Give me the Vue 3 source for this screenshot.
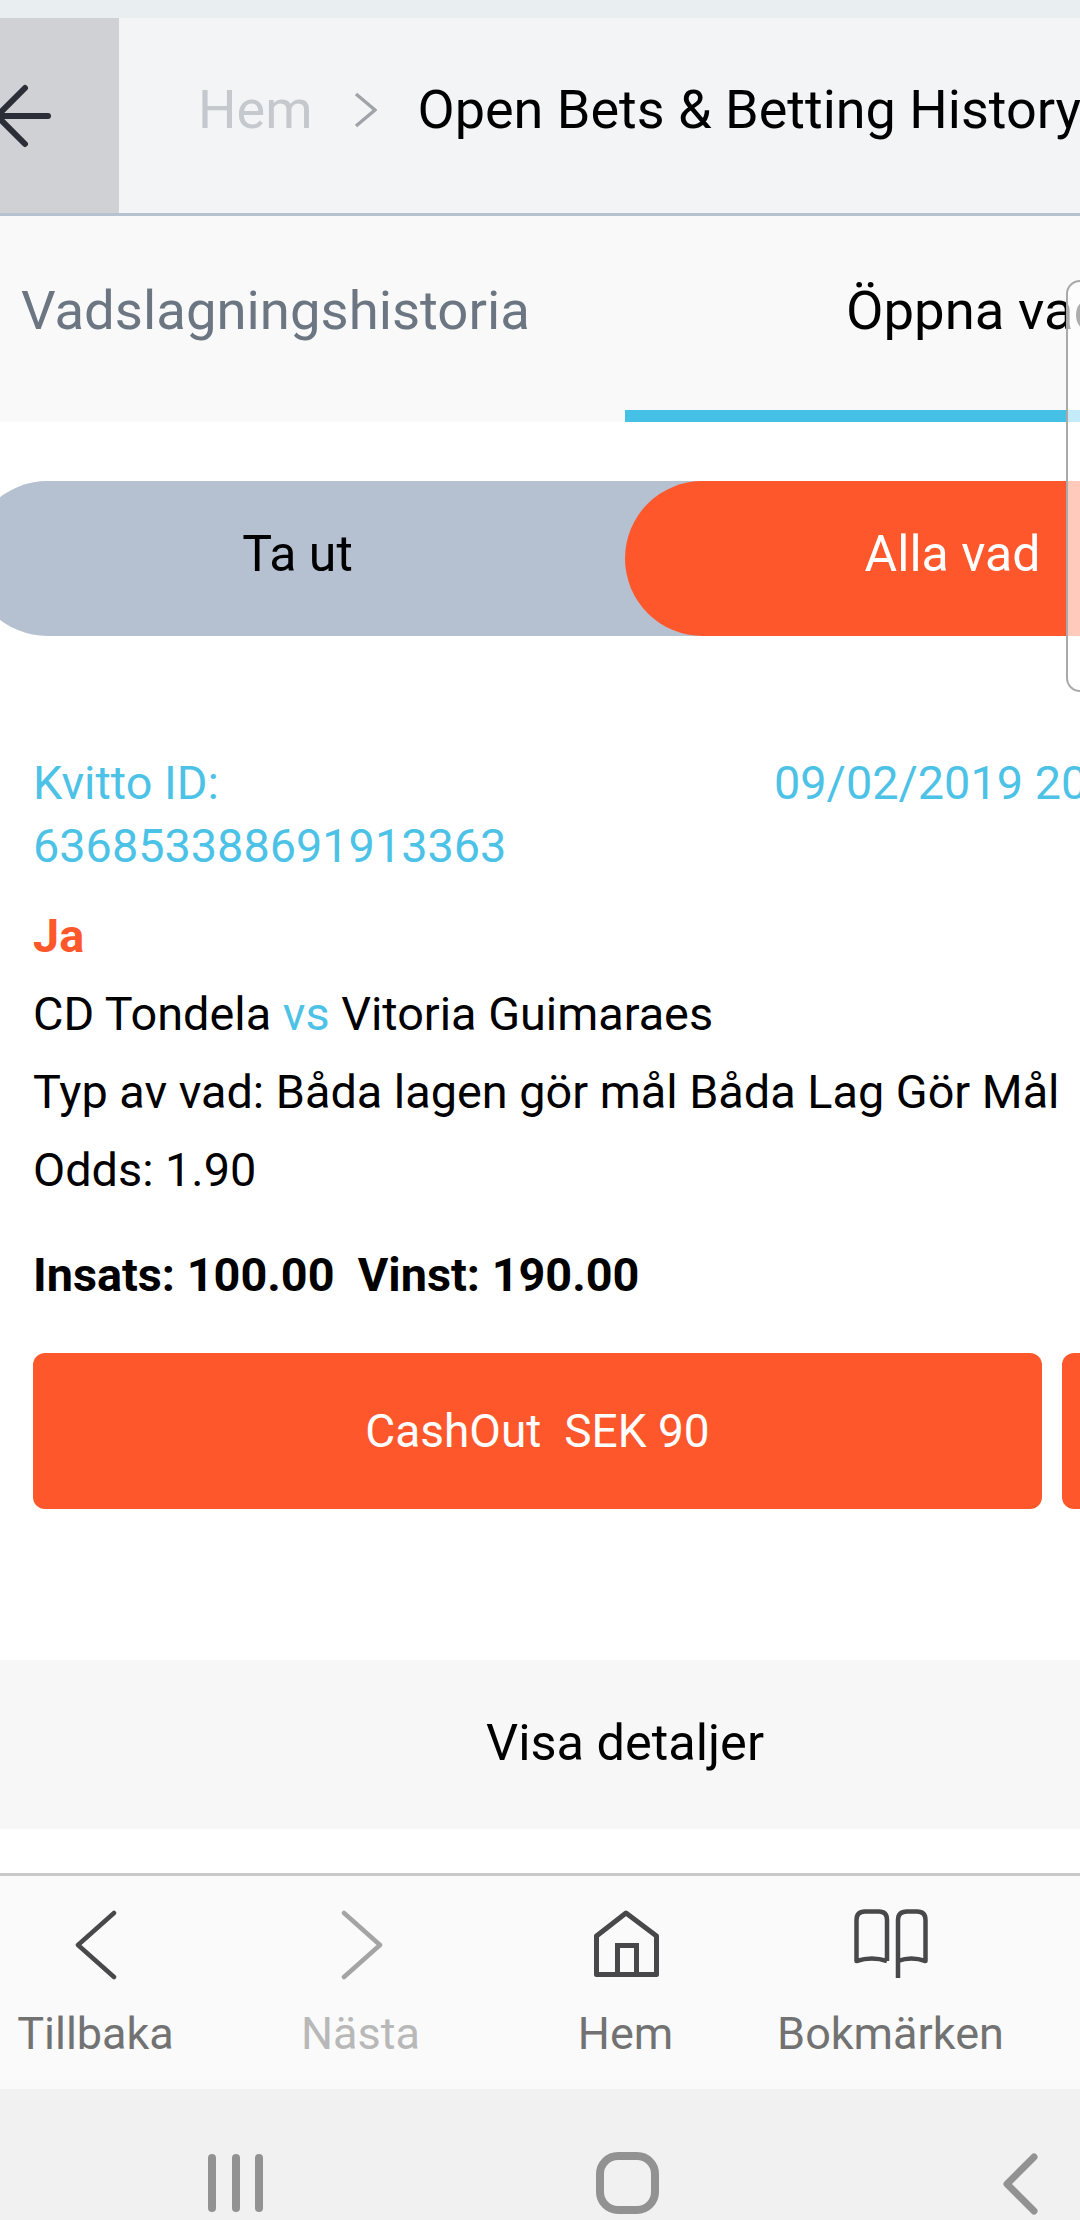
<script setup>
const details = [
  { label: "Typ av vad: Båda lagen gör mål Båda Lag Gör Mål" },
  { label: "Odds: 1.90" },
];
const navItems = [
  { label: "Tillbaka", icon: "back" },
  { label: "Nästa", icon: "next", disabled: true },
  { label: "Hem", icon: "home" },
  { label: "Bokmärken", icon: "book" },
];
</script>

<template>
  <div class="screen">
    <div class="status"></div>

    <header class="crumbs">
      <button class="back">
        <svg width="52" height="64" viewBox="0 0 52 64" fill="none" stroke="#2b2e36" stroke-width="6" stroke-linecap="round" stroke-linejoin="round">
          <path d="M48 32H0M25 4L-3 32L25 60" />
        </svg>
      </button>
      <span class="crumb-home">Hem</span>
      <svg class="crumb-sep" width="23" height="36" viewBox="0 0 23 36" fill="none" stroke="#a0a4a8" stroke-width="3.500">
        <path d="M2 2L21 18L2 34" />
      </svg>
      <span class="crumb-title">Open Bets &amp; Betting History</span>
    </header>

    <nav class="tabs">
      <div class="tab">Vadslagningshistoria</div>
      <div class="tab active">Öppna vad</div>
    </nav>

    <div class="segment">
      <div class="seg-item">Ta ut</div>
      <div class="seg-item on">Alla vad</div>
    </div>

    <section class="receipt">
      <div class="receipt-head">
        <div class="rid">Kvitto ID:<br />636853388691913363</div>
        <div class="rdate">09/02/2019 20:31</div>
      </div>
      <div class="pick">Ja</div>
      <div class="line">CD Tondela <span class="vs">vs</span> Vitoria Guimaraes</div>
      <div v-for="d in details" :key="d.label" class="line">{{ d.label }}</div>
      <div class="stake">Insats: 100.00&nbsp; Vinst: 190.00</div>
      <div class="actions">
        <button class="cash">CashOut&nbsp; SEK 90</button>
        <button class="cash second"></button>
      </div>
    </section>

    <div class="more">Visa detaljer</div>

    <footer class="browser-bar">
      <div v-for="item in navItems" :key="item.label" class="bar-item" :class="{ disabled: item.disabled }">
        <svg width="80" height="72" viewBox="0 0 80 72" fill="none" stroke="currentColor" stroke-width="4.500" stroke-linejoin="round">
          <path v-if="item.icon === 'back'" d="M58 5L22 37L58 69" stroke-linecap="round" />
          <path v-if="item.icon === 'next'" d="M23 5L59 37L23 69" stroke-linecap="round" />
          <template v-if="item.icon === 'home'">
            <path d="M10.500 28L40 5L70.500 28V66.500H10.500Z" stroke-width="5" />
            <path d="M31.500 66V37.500H50.500V66" stroke-width="5" stroke-linejoin="miter" />
          </template>
          <template v-if="item.icon === 'book'">
            <path d="M36 53V12Q36 3.500 28 3.500H14Q5.500 3.500 5.500 12V53Q21 48 36 53" />
            <path d="M47 70V12Q47 3.500 56 3.500H66Q74.500 3.500 74.500 12V53Q60 48 47 53" />
          </template>
        </svg>
        <span>{{ item.label }}</span>
      </div>
    </footer>

    <div class="android-nav">
      <div class="bars"><i></i><i></i><i></i></div>
      <div class="square"></div>
      <svg class="nav-back" width="36" height="62" viewBox="0 0 36 62" fill="none" stroke="#929292" stroke-width="7" stroke-linecap="round" stroke-linejoin="round">
        <path d="M32 4L5 31L32 58" />
      </svg>
    </div>

    <div class="floating-panel"></div>
  </div>
</template>

<style>
html,
body {
  margin: 0;
  background: #fff;
  overflow: hidden;
}
</style>

<style scoped>
.screen {
  position: relative;
  width: 1080px;
  height: 2220px;
  overflow: hidden;
  background: #fff;
  font-family: Roboto, "Noto Sans", sans-serif;
  color: #000;
}
.status {
  height: 18px;
  background: #e9eef0;
}
.crumbs {
  height: 195px;
  display: flex;
  align-items: center;
  background: #f3f4f6;
  border-bottom: 3px solid #b7c1cf;
  font-size: 54px;
  white-space: nowrap;
}
.back {
  width: 119px;
  height: 100%;
  flex: none;
  border: 0;
  padding: 0;
  background: #d0d1d5;
  text-align: left;
}
.back svg {
  display: block;
}
.crumb-home {
  margin: 0 0 12px 79px;
  color: #c5c9ce;
}
.crumb-sep {
  margin: 0 0 12px 41px;
  flex: none;
}
.crumb-title {
  margin: 0 0 12px 41px;
}
.tabs {
  height: 206px;
  display: grid;
  grid-template-columns: 625px 655px;
  background: #f9f9f9;
  font-size: 54.5px;
  white-space: nowrap;
}
.tab {
  box-sizing: border-box;
  padding: 62px 0 0 21px;
  color: #6b7682;
}
.tab.active {
  padding-left: 221px;
  color: #000;
  border-bottom: 12px solid #45c1e8;
}
.segment {
  margin: 59px 0 0 -30px;
  width: 1310px;
  height: 155px;
  display: flex;
  background: #b5c1d0;
  border-radius: 78px;
  font-size: 50px;
}
.seg-item {
  flex: 1;
  display: flex;
  align-items: center;
  justify-content: center;
  box-sizing: border-box;
  padding-bottom: 10px;
  border-radius: 78px;
}
.seg-item.on {
  background: #ff572c;
  color: #fff;
}
.receipt {
  padding: 116px 0 0 33px;
  font-size: 46.8px;
}
.receipt-head {
  display: grid;
  grid-template-columns: 741px 400px;
  line-height: 63px;
  color: #4cc2e6;
  white-space: nowrap;
}
.pick {
  margin-top: 19px;
  line-height: 78px;
  color: #ff572c;
  font-weight: 700;
}
.line {
  line-height: 78px;
  white-space: nowrap;
}
.vs {
  color: #4cc2e6;
}
.stake {
  margin-top: 27px;
  line-height: 78px;
  font-weight: 700;
}
.actions {
  margin-top: 39px;
  display: flex;
  gap: 20px;
  width: 1300px;
}
.cash {
  width: 1009px;
  height: 156px;
  flex: none;
  border: 0;
  border-radius: 12px;
  background: #ff572c;
  color: #fff;
  font: 46px Roboto, "Noto Sans", sans-serif;
}
.cash.second {
  width: 300px;
}
.more {
  margin-top: 151px;
  width: 1250px;
  height: 169px;
  display: flex;
  align-items: center;
  justify-content: center;
  padding-bottom: 4px;
  box-sizing: border-box;
  background: #f7f7f7;
  font-size: 50.5px;
}
.browser-bar {
  margin: 44px 0 0 -37px;
  width: 1117px;
  height: 213px;
  display: grid;
  grid-template-columns: repeat(4, 265px);
  background: #fafafa;
  border-top: 3px solid #c9c9c9;
}
.bar-item {
  padding-top: 32px;
  display: flex;
  flex-direction: column;
  align-items: center;
  color: #48484a;
  font-size: 45px;
}
.bar-item span {
  margin-top: 27px;
  color: #727272;
  white-space: nowrap;
}
.bar-item.disabled {
  color: #a4a4a4;
}
.bar-item.disabled span {
  color: #b8b8b8;
}
.android-nav {
  height: 131px;
  position: relative;
  background: #f1f1f2;
}
.bars {
  position: absolute;
  left: 208px;
  top: 65px;
  display: flex;
  gap: 15.500px;
}
.bars i {
  display: block;
  width: 8px;
  height: 58px;
  border-radius: 4px;
  background: #929292;
}
.square {
  position: absolute;
  left: 596px;
  top: 63px;
  width: 63px;
  height: 62px;
  box-sizing: border-box;
  border: 8px solid #929292;
  border-radius: 22px;
}
.nav-back {
  position: absolute;
  left: 1002px;
  top: 64px;
}
.floating-panel {
  position: absolute;
  left: 1066px;
  top: 280px;
  width: 40px;
  height: 412px;
  box-sizing: border-box;
  border: 2px solid #a9a9a9;
  border-radius: 14px;
  background: rgba(255, 255, 255, 0.68);
}
</style>
